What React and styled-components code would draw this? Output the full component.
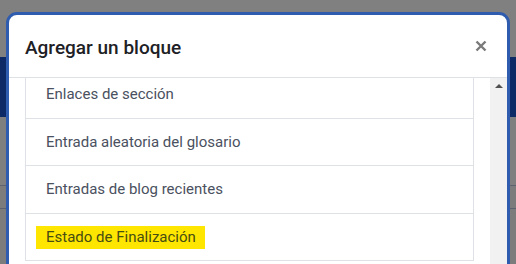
import React from 'react';
import styled, { createGlobalStyle } from 'styled-components';

const GlobalStyle = createGlobalStyle`
  html, body {
    margin: 0;
    padding: 0;
    width: 516px;
    height: 264px;
    overflow: hidden;
    font-family: Roboto, "Liberation Sans", Arial, sans-serif;
  }
  * { box-sizing: border-box; }
`;

const Page = styled.div`
  position: relative;
  width: 516px;
  height: 264px;
  overflow: hidden;
  background: #7f7f7f;
`;

const TopStrip = styled.div`
  height: 57px;
  background: #808080;
`;

const NavBand = styled.div`
  height: 60px;
  background: #0d2a66;
`;

const PageBody = styled.div`
  height: 147px;
  background: #7c7c7c;
`;

const PageRule = styled.div`
  height: 1px;
  margin-top: ${p => p.gap}px;
  background: #5c6270;
`;

const Modal = styled.div`
  position: absolute;
  left: 6px;
  top: 12px;
  width: 504px;
  height: 300px;
  background: #fff;
  border: 3px solid #2f5cae;
  border-radius: 11px;
  display: flex;
  flex-direction: column;
  overflow: hidden;
`;

const Header = styled.div`
  height: 63px;
  flex: none;
  display: flex;
  align-items: center;
  justify-content: space-between;
  padding: 0 20px 0 16px;
  border-bottom: 1px solid #dee2e6;
`;

const Title = styled.h5`
  margin: 0;
  padding-top: 2px;
  font-size: 19px;
  font-weight: 500;
  color: #1d2125;
`;

const Close = styled.button`
  border: 0;
  background: none;
  padding: 0;
  width: 12px;
  height: 12px;
  display: flex;
  cursor: pointer;
`;

const Body = styled.div`
  flex: 1;
  display: flex;
  min-height: 0;
`;

/* the list is shown scrolled down by a few pixels */
const Scroller = styled.div`
  flex: 1;
  overflow: hidden;
  padding: 0 16px;
`;

const List = styled.ul`
  margin: -8px 0 0;
  padding: 0;
  list-style: none;
  border-left: 1px solid #dee2e6;
  border-right: 1px solid #dee2e6;
`;

const Item = styled.li`
  padding: 12px 20px;
  font-size: 15px;
  line-height: 22.5px;
  color: #4a5160;
  border-top: 1px solid #dee2e6;
  &:last-child { border-bottom: 1px solid #dee2e6; }
`;

const Mark = styled.span`
  background: #ffe600;
  color: #464d12;
  margin-left: -10px;
  padding: 2px 9px 3px 10px;
`;

const ScrollTrack = styled.div`
  width: 17px;
  flex: none;
  background: #f1f1f1;
  display: flex;
  justify-content: center;
  padding-top: 6px;
`;

const Arrow = styled.div`
  width: 0;
  height: 0;
  border-left: 4px solid transparent;
  border-right: 4px solid transparent;
  border-bottom: 4px solid #505050;
`;

const blocks = [
  'Enlaces de sección',
  'Entrada aleatoria del glosario',
  'Entradas de blog recientes',
  'Estado de Finalización',
];

export default function App() {
  return (
    <>
      <GlobalStyle />
      <Page>
        <TopStrip />
        <NavBand />
        <PageBody>
          <PageRule gap={68} />
          <PageRule gap={22} />
        </PageBody>
        <Modal role="dialog">
          <Header>
            <Title>Agregar un bloque</Title>
            <Close aria-label="Cerrar">
              <svg width="12" height="12" viewBox="0 0 12 12">
                <path d="M1.5 1.5 L10.5 10.5 M10.5 1.5 L1.5 10.5" stroke="#7a7a7a" strokeWidth="2.4" />
              </svg>
            </Close>
          </Header>
          <Body>
            <Scroller>
              <List>
                {blocks.map(b => (
                  <Item key={b}>
                    {b === 'Estado de Finalización' ? <Mark>{b}</Mark> : b}
                  </Item>
                ))}
              </List>
            </Scroller>
            <ScrollTrack>
              <Arrow />
            </ScrollTrack>
          </Body>
        </Modal>
      </Page>
    </>
  );
}
